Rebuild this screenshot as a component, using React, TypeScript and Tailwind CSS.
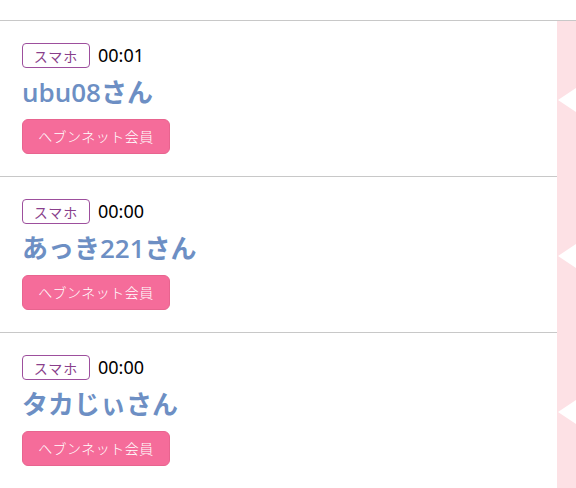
import React from "react";

const rows = [
  { time: "00:01", name: "ubu08さん" },
  { time: "00:00", name: "あっき221さん" },
  { time: "00:00", name: "タカじぃさん" },
];

export default function App() {
  return (
    <div
      className="w-[576px] h-[488px] overflow-hidden bg-white"
      style={{ fontFamily: '"Noto Sans CJK JP", "Noto Sans", sans-serif' }}
    >
      <div className="h-[21px] border-b border-[#c8c8c8]" />
      {rows.map((r, i) => (
        <div key={i} className="flex h-[156px]">
          <div className="flex-1 border-b border-[#c8c8c8] pl-[22px] pt-[22px]">
            <div className="flex items-center h-[25px]">
              <span className="flex items-center justify-center w-[68px] h-[25px] border border-[#9d4f9d] rounded-[4px] text-[#8a3f8c] text-[14px] leading-none tracking-[1px]">
                スマホ
              </span>
              <span
                className="ml-[8px] text-[18px] text-black"
                style={{ fontFamily: '"Noto Sans", "Open Sans", sans-serif' }}
              >
                {r.time}
              </span>
            </div>
            <div
              className="mt-[8px] h-[32px] flex items-center text-[26px] font-semibold text-[#6d8fc4] leading-none"
              style={{ fontFamily: '"Open Sans", "Noto Sans CJK JP", sans-serif' }}
            >
              {r.name}
            </div>
            <div className="mt-[11px] w-[148px] h-[35px] rounded-[6px] bg-[#f56c9a] border border-[#e8648f] flex items-center justify-center text-white text-[14px] tracking-[0.5px] font-light">
              ヘブンネット会員
            </div>
          </div>
          <div className="relative w-[19px] bg-[#fde1e5]">
            <svg
              className="absolute left-0 top-[67px]"
              width="19"
              height="24"
              viewBox="0 0 19 24"
            >
              <polygon points="1,12 19,0 19,24" fill="#ffffff" />
            </svg>
          </div>
        </div>
      ))}
    </div>
  );
}
